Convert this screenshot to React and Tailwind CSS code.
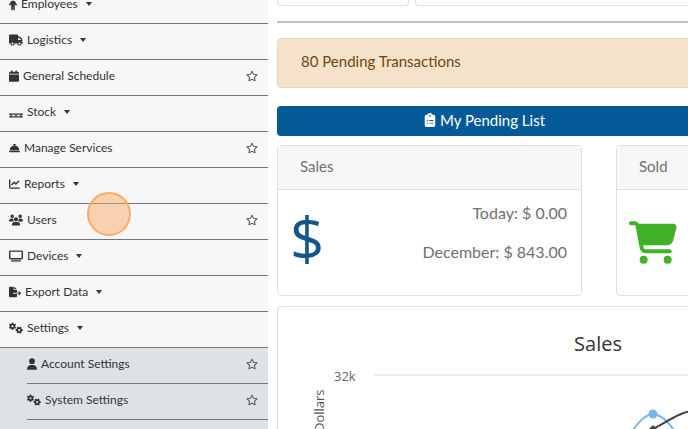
import clsx from "clsx";
import {
  FaBellConcierge,
  FaCalendar,
  FaCartShopping,
  FaChartLine,
  FaClipboardList,
  FaFileExport,
  FaGears,
  FaPallet,
  FaPerson,
  FaRegStar,
  FaTruck,
  FaTv,
  FaUser,
  FaUsers,
} from "react-icons/fa6";

const menu = [
  { label: "Employees", icon: FaPerson, size: "w-2", dropdown: true },
  { label: "Logistics", icon: FaTruck, size: "w-3.5", dropdown: true },
  { label: "General Schedule", icon: FaCalendar, size: "w-2.5" },
  { label: "Stock", icon: FaPallet, size: "w-3.5", dropdown: true },
  { label: "Manage Services", icon: FaBellConcierge, size: "w-[11px]" },
  { label: "Reports", icon: FaChartLine, size: "w-[11px]", dropdown: true },
  { label: "Users", icon: FaUsers, size: "w-3.5" },
  { label: "Devices", icon: FaTv, size: "w-3.5", dropdown: true },
  { label: "Export Data", icon: FaFileExport, size: "w-3", dropdown: true },
  { label: "Settings", icon: FaGears, size: "w-3.5", dropdown: true },
];

const settingsMenu = [
  { label: "Account Settings", icon: FaUser, size: "w-2.5" },
  { label: "System Settings", icon: FaGears, size: "w-3.5" },
  { label: "Email Settings", icon: FaGears, size: "w-3.5" },
];

function MenuRow({ label, icon: Icon, size, dropdown, nested }) {
  const content = (
    <>
      <Icon className={clsx("h-3.5 shrink-0", size)} />
      <span>{label}</span>
      {dropdown && (
        <span className="ml-1 border-x-[3px] border-t-4 border-x-transparent border-t-[#333]" />
      )}
    </>
  );

  return (
    <li
      className={clsx(
        "flex h-9 items-center justify-between border-b border-[#777] pr-2.5 pb-[3px]",
        !nested && "pl-[9px]"
      )}
    >
      {dropdown ? (
        <button type="button" className="flex items-center gap-1">
          {content}
        </button>
      ) : (
        <>
          <a href="#" className="flex items-center gap-1">
            {content}
          </a>
          <button type="button" aria-label={`Favorite ${label}`}>
            <FaRegStar className="size-3 text-[#555]" />
          </button>
        </>
      )}
    </li>
  );
}

function Sidebar() {
  return (
    <nav className="w-[268px] shrink-0 bg-[#f7f7f7] text-xs leading-5 text-[#333]">
      <ul className="-mt-3">
        {menu.map((item) => (
          <MenuRow key={item.label} {...item} />
        ))}
      </ul>
      <ul className="bg-[#dee2e6] pl-[27px]">
        {settingsMenu.map((item) => (
          <MenuRow key={item.label} nested {...item} />
        ))}
      </ul>
    </nav>
  );
}

function StatCard({ title, icon, children }) {
  return (
    <section className="h-[151px] w-[305px] shrink-0 rounded border border-[#dfdfdf] bg-white">
      <h2 className="flex h-11 items-center border-b border-[#dfdfdf] bg-[#f7f7f7] px-[22px] pb-1">
        {title}
      </h2>
      <div className="flex justify-between pr-3.5 pl-3">
        {icon}
        <div className="pt-[11px] text-right text-base">{children}</div>
      </div>
    </section>
  );
}

function SalesChart() {
  return (
    <section className="min-w-[642px] rounded border border-[#dfdfdf] bg-white">
      <h2 className="pt-[22px] text-center font-['Open_Sans',sans-serif] text-xl leading-[30px] text-[#333]">
        Sales
      </h2>
      <svg
        viewBox="0 0 642 200"
        className="h-[200px] w-[642px] font-['Open_Sans',sans-serif] text-[13px]"
        fill="none"
      >
        <text x="56" y="22" fill="#666">32k</text>
        <text transform="translate(46 73) rotate(-90)" fill="#555">Dollars</text>
        <path d="M96 16H642" stroke="#ededed" strokeWidth="2" />
        <path d="M346 84C358 66 365 56 375 55C386 56 394 67 404 84" stroke="#7cb5ec" strokeWidth="2" />
        <circle cx="375" cy="55" r="4.5" fill="#7cb5ec" />
        <path d="M364 76L375 70C392 61 400 54 420 50" stroke="#434348" strokeWidth="2" />
        <path d="M375 66l4 4-4 4-4-4z" fill="#434348" />
      </svg>
    </section>
  );
}

export default function App() {
  return (
    <div className="relative flex h-screen overflow-hidden bg-white font-['Lato',sans-serif]">
      <Sidebar />
      <main className="min-w-0 flex-1 overflow-hidden pl-[9px] text-[15px] leading-6 text-[#707070]">
        <div className="flex h-1.5 gap-1.5">
          <div className="w-[132px] shrink-0 rounded-b border border-t-0 border-[#dfdfdf]" />
          <div className="flex-1 rounded-bl border-b border-l border-[#dfdfdf]" />
        </div>
        <hr className="mt-[15px] border-t-2 border-[#bfbfbf]" />
        <div
          role="alert"
          className="mt-[15px] -mr-2 flex h-[50px] items-center rounded border border-[#ecd6b8] bg-[#f5e2cb] px-[23px] pb-1 text-[#70460f]"
        >
          80 Pending Transactions
        </div>
        <div className="-mr-1 pt-[18px]">
          <button
            type="button"
            className="flex h-[30px] w-full items-center justify-center gap-1 rounded bg-[#045a96] pb-[3px] text-white"
          >
            <FaClipboardList className="h-3.5 w-3" />
            My Pending List
          </button>
        </div>
        <div className="mt-[9px] flex gap-[34px]">
          <StatCard
            title="Sales"
            icon={
              <span className="pt-4 font-['Open_Sans',sans-serif] text-[60px] leading-[64px] text-[#14568c]">$</span>
            }
          >
            <p>Today: $ 0.00</p>
            <p className="mt-[15px]">December: $ 843.00</p>
          </StatCard>
          <StatCard
            title="Sold"
            icon={<FaCartShopping className="mt-[31px] h-[43px] w-12 text-[#43b02a]" />}
          />
        </div>
        <div className="pt-2.5">
          <SalesChart />
        </div>
      </main>
      {/* click highlight */}
      <div className="absolute top-48 left-[87px] size-11 rounded-full border-2 border-[#fbab68] bg-[#f9a15b]/45" />
    </div>
  );
}
